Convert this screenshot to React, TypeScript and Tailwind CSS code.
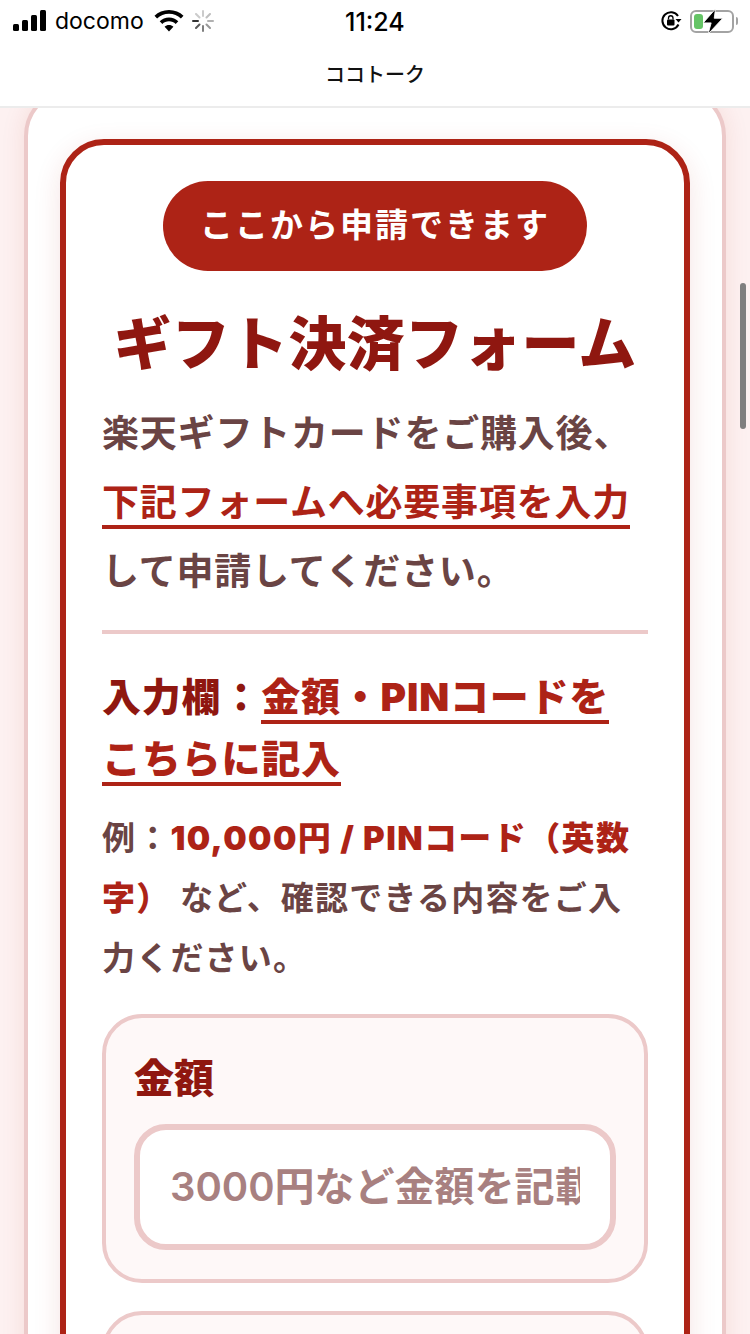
import React from 'react';

const font = { fontFamily: 'Inter, "Noto Sans CJK JP", sans-serif' };

const StatusBar = () => (
  <div className="h-[42px] flex items-center justify-between pl-[13px] pr-[12px] relative">
    <div className="flex items-center">
      <svg width="34" height="22" viewBox="0 0 34 22" fill="#000">
        <rect x="0" y="14" width="6" height="7" rx="1.5" />
        <rect x="9" y="10" width="6" height="11" rx="1.5" />
        <rect x="18" y="5" width="6" height="16" rx="1.5" />
        <rect x="27" y="0" width="6" height="21" rx="1.5" />
      </svg>
      <span className="ml-[8px] text-[23px] leading-none text-black">docomo</span>
      <svg className="ml-[10px]" width="30" height="22" viewBox="0 0 30 22" fill="#000">
        <path d="M15 0C9.3 0 4.2 2.2.5 5.8l2.6 2.8C6.2 5.6 10.4 3.8 15 3.8s8.8 1.8 11.9 4.8l2.6-2.8C25.8 2.2 20.7 0 15 0z" />
        <path d="M15 7.5c-3.6 0-6.9 1.4-9.3 3.7l2.6 2.8C10 12.300 12.400 11.300 15 11.300s5 1 6.700 2.700l2.600-2.800C21.900 8.900 18.600 7.500 15 7.500z" />
        <path d="M15 15c-1.700 0-3.200.6-4.400 1.700L15 21.500l4.400-4.800C18.200 15.600 16.700 15 15 15z" />
      </svg>
      <svg className="ml-[8px]" width="22" height="22" viewBox="0 0 22 22" stroke="#000" strokeWidth="2" strokeLinecap="round">
        <path d="M11 1v5" opacity="0.2" />
        <path d="M18 4l-3.500 3.500" opacity="0.25" />
        <path d="M21 11h-5" opacity="0.3" />
        <path d="M18 18l-3.500-3.500" opacity="0.4" />
        <path d="M11 21v-5" opacity="0.5" />
        <path d="M4 18l3.500-3.500" opacity="0.65" />
        <path d="M1 11h5" opacity="0.8" />
        <path d="M4 4l3.500 3.500" opacity="0.2" />
      </svg>
    </div>
    <span className="absolute left-[345px] top-[7px] text-[25px] leading-[30px] font-medium text-black">11:24</span>
    <div className="flex items-center">
      <svg width="22" height="22" viewBox="0 0 22 22" fill="none">
        <path d="M18.500 14.500A8.500 8.500 0 1 1 18 6" stroke="#000" strokeWidth="2" />
        <path d="M15.500 9h6l-3 3.500z" fill="#000" />
        <rect x="7" y="9.500" width="7.500" height="6" rx="1" fill="#000" />
        <path d="M8.500 9.500V8a2.200 2.200 0 0 1 4.500 0v1.500" stroke="#000" strokeWidth="1.300" />
      </svg>
      <div className="ml-[8px] relative w-[44px] h-[23px] border-2 border-[#a3a3a3] rounded-[6px]">
        <div className="absolute left-[2px] top-[2px] w-[9px] h-[15px] rounded-[3px] bg-[#65c466]" />
        <svg className="absolute left-[10px] top-[-3px]" width="22" height="25" viewBox="0 0 18 27" preserveAspectRatio="none" fill="#000" stroke="#fff" strokeWidth="0.800">
          <path d="M11 0L1 15h6.500L5 27 17 10h-7z" />
        </svg>
      </div>
      <div className="ml-[2px] w-[2px] h-[8px] rounded-r bg-[#a3a3a3]" />
    </div>
  </div>
);

export default function App() {
  return (
    <div className="h-[1334px] w-[750px] overflow-hidden flex flex-col relative" style={font}>
      <header className="h-[108px] shrink-0 bg-white border-b-2 border-[#ececec] z-10">
        <StatusBar />
        <div className="text-center text-[20px] leading-[28px] mt-[19px] font-medium text-[#111]">ココトーク</div>
      </header>

      <main className="flex-1 overflow-hidden bg-[#fdf1f1] px-[24px]">
        <div className="-mt-[20px] bg-white border-4 border-[#ecc9c9] rounded-[48px] px-[32px] pt-[47px] pb-[40px] shadow-[0_0_24px_rgba(173,35,22,0.1)]">
          <section className="border-[6px] border-[#ad2316] rounded-[44px] bg-white px-[36px] pt-[36px] pb-[40px] shadow-[0_8px_28px_rgba(173,35,22,0.12)]">
            <div className="flex justify-center">
              <div className="w-[424px] h-[90px] rounded-full bg-[#ad2316] text-white text-[33px] font-bold tracking-[2px] flex items-center justify-center">
                ここから申請できます
              </div>
            </div>

            <h1 className="mt-[33px] text-center text-[58px] leading-[80px] tracking-[0.3px] font-black text-[#8f1710] whitespace-nowrap">
              ギフト決済フォーム
            </h1>

            <p className="mt-[15px] text-[37px] leading-[69px] tracking-[0.8px] font-semibold text-[#6a4444]">
              楽天ギフトカードをご購入後、
              <br />
              <span className="font-bold text-[#ad2316] border-b-4 border-[#ad2316]">下記フォームへ必要事項を入力</span>
              <br />
              して申請してください。
            </p>

            <div className="mt-[24px] h-[4px] bg-[#ecc9c9]" />

            <h2 className="mt-[32px] text-[39px] leading-[62px] tracking-[0.8px] font-black text-[#8f1710]">
              入力欄：
              <span className="text-[#ad2316] border-b-4 border-[#ad2316]">金額・PINコードを</span>
              <br />
              <span className="text-[#ad2316] border-b-4 border-[#ad2316]">こちらに記入</span>
            </h2>

            <p className="mt-[18px] text-[33px] leading-[60px] tracking-[1.2px] font-semibold text-[#6a4444]">
              例：<span className="font-black tracking-[1.4px] text-[#ad2316]">10,000円 / PINコード（英数</span>
              <br />
              <span className="font-black text-[#ad2316]">字）</span> など、確認できる内容をご入
              <br />
              力ください。
            </p>

            <div className="mt-[26px] border-4 border-[#ecc9c9] rounded-[40px] bg-[#fef8f8] px-[28px] pt-[30px] pb-[29px]">
              <div className="text-[40px] leading-[62px] font-black text-[#8f1710]">金額</div>
              <div className="mt-[14px] h-[126px] border-[6px] border-[#ecc9c9] rounded-[32px] bg-white px-[30px] flex items-center">
                <div className="overflow-hidden whitespace-nowrap text-[40px] font-semibold text-[#a88080]">3000円など金額を記載してください</div>
              </div>
            </div>

            <div className="mt-[28px] h-[200px] border-4 border-[#ecc9c9] rounded-[40px] bg-[#fef8f8]" />
          </section>
        </div>
      </main>

      <div className="absolute right-[4px] top-[283px] w-[6px] h-[146px] rounded-full bg-[#7f7f7f]" />
    </div>
  );
}
